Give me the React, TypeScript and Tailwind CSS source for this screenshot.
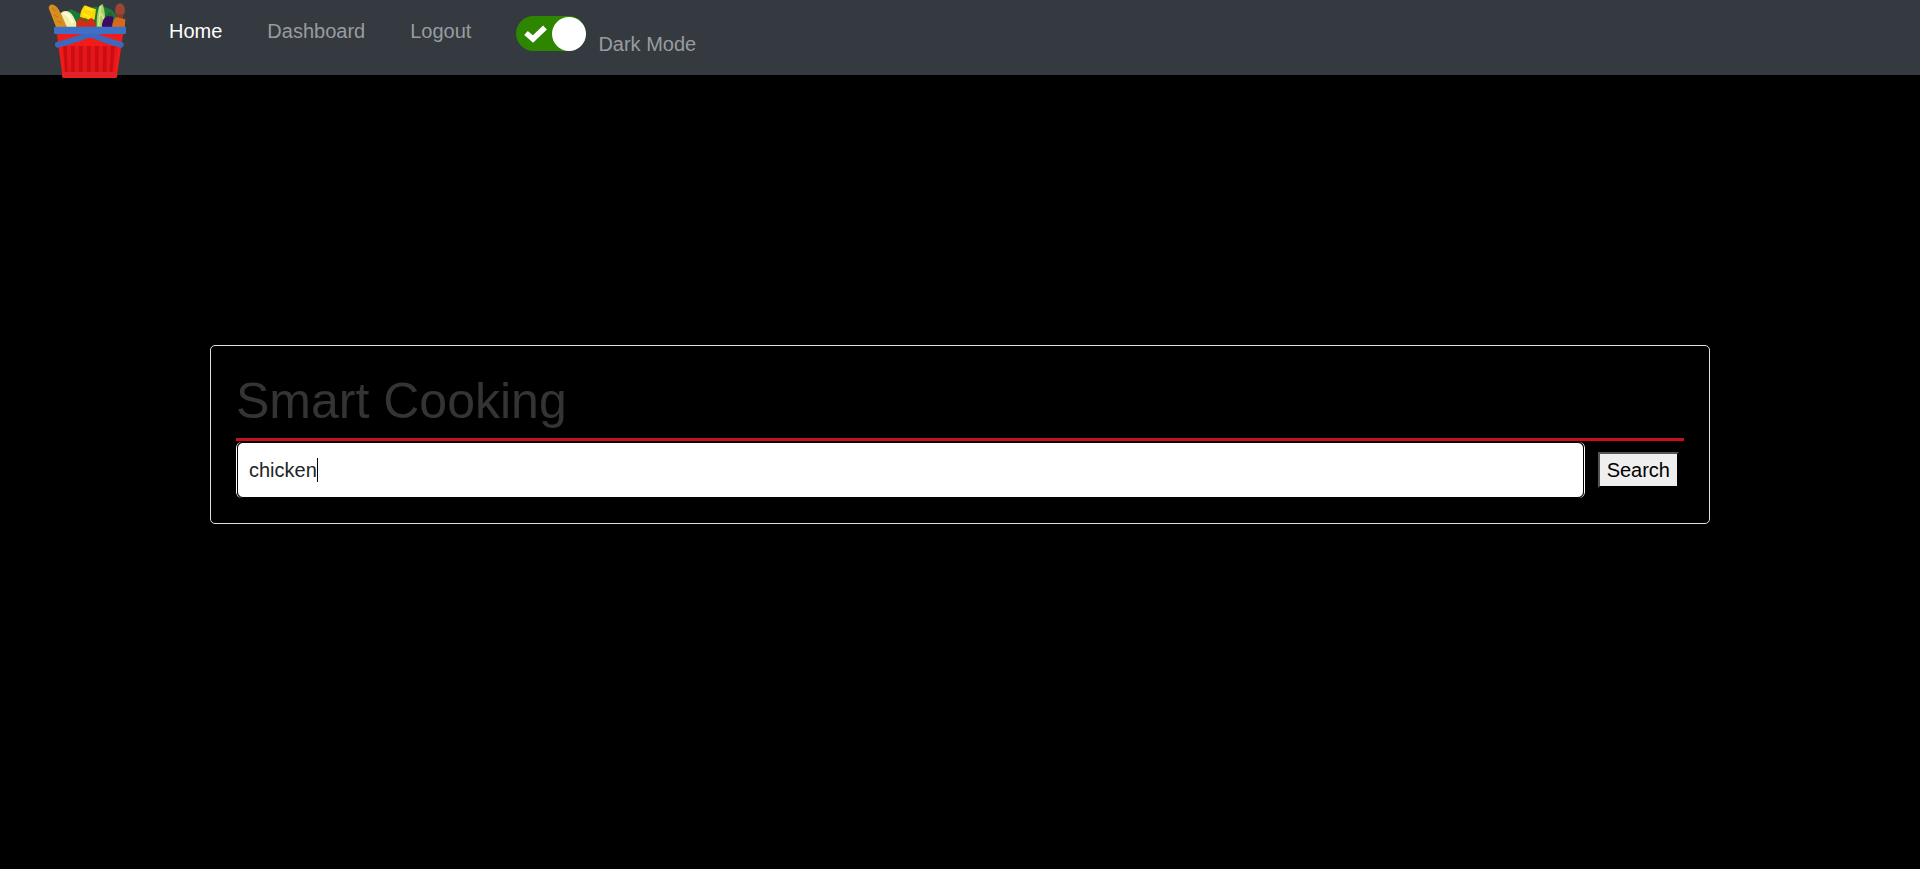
import { useState } from "react";

function BasketLogo() {
  return (
    <svg viewBox="24 6 240 228" className="h-[76px] w-20" aria-hidden="true">
      <path d="M62 66 L68 38 L94 28 L122 42 L162 20 L196 22 L216 30 L232 50 L232 90 L62 90Z" fill="#177a36" />
      <path d="M26 24 Q28 12 40 14 Q52 18 60 36 L84 86 L50 86Z" fill="#d98c20" />
      <path d="M36 24 L46 32 M42 44 L54 52 M50 62 L64 68" stroke="#c67a18" strokeWidth="4" />
      <path d="M62 40 Q72 28 88 36 Q102 44 114 84 L82 84Z" fill="#f6efaa" />
      <path d="M70 42 Q80 38 88 50 L98 68" stroke="#fffde0" strokeWidth="8" fill="none" />
      <path d="M134 16 L168 28 L164 58 L152 66 L120 50 Q122 28 134 16Z" fill="#fbd800" />
      <path d="M136 24 L158 32 M130 42 L152 52" stroke="#ffe92c" strokeWidth="6" />
      <path d="M108 84 Q108 56 126 52 L138 62 L154 54 Q170 62 166 84Z" fill="#d32b18" />
      <path d="M118 58 L136 54 L150 62 L136 66Z" fill="#6a5a1a" />
      <path d="M170 82 Q168 46 178 18 L188 12 Q198 38 194 82Z" fill="#a9cf64" />
      <path d="M182 18 L176 78 M184 40 L192 58" stroke="#d4e896" strokeWidth="5" />
      <path d="M186 84 Q184 56 202 48 Q216 40 220 52 L218 86Z" fill="#3b0a62" />
      <path d="M198 48 L212 36 L222 50Z" fill="#26642a" />
      <ellipse cx="240" cy="30" rx="15" ry="20" fill="#984536" />
      <path d="M230 42 L250 42 L246 68 L228 68Z" fill="#8c3a30" />
      <path d="M216 84 Q218 54 230 52 L256 58 L254 86Z" fill="#d8681d" />
      <path d="M50 98 L250 98 L230 234 L68 234Z" fill="#f11c17" />
      <path d="M66 138 L234 138 L224 216 L74 216Z" fill="#e5171a" />
      <path d="M70 138 H80 L83 216 H75Z M93 138 H104 V216 H94Z M117 138 H128 V216 H117Z M141 138 H152 V216 H141Z M165 138 H176 V216 H165Z M189 138 H200 L199 216 H188Z M213 138 H224 L218 216 H209Z" fill="#c90d12" />
      <rect x="66" y="216" width="166" height="16" rx="6" fill="#e32229" />
      <path d="M54 134 Q110 120 172 94" stroke="#3d68bd" strokeWidth="18" strokeLinecap="round" fill="none" />
      <path d="M128 94 Q190 120 242 134" stroke="#3d68bd" strokeWidth="18" strokeLinecap="round" fill="none" />
      <rect x="42" y="80" width="216" height="22" rx="4" fill="#3f70c8" />
    </svg>
  );
}

export default function App() {
  const [dark, setDark] = useState(true);
  const [query, setQuery] = useState("chicken");

  return (
    <div className="flex min-h-screen flex-col bg-black font-['Liberation_Sans',Arial,sans-serif] text-xl leading-[30px]">
      <nav className="flex h-[75px] items-start bg-[#343a40] pl-12">
        <a href="#" aria-label="Smart Cooking" className="pt-0.5">
          <BasketLogo />
        </a>
        <div className="ml-[41px] flex gap-[45px] pt-4 text-[#999c9f]">
          <a href="#home" className="text-white">Home</a>
          <a href="#dashboard">Dashboard</a>
          <a href="#logout">Logout</a>
        </div>
        <label className="ml-[45px] flex cursor-pointer items-start gap-3 pt-4 text-[#999c9f]">
          <input
            type="checkbox"
            role="switch"
            className="peer sr-only"
            checked={dark}
            onChange={(e) => setDark(e.target.checked)}
          />
          <span
            className={
              dark
                ? "flex h-[35px] w-[70px] items-center justify-between rounded-full bg-[#2e8500] pl-2"
                : "flex h-[35px] w-[70px] flex-row-reverse items-center justify-between rounded-full bg-gray-500 pr-2"
            }
          >
            <svg viewBox="0 0 24 18" className="h-[18px] w-6" aria-hidden="true">
              <path d="M2 8 L9 14 L21 2.5" fill="none" stroke="#fff" strokeWidth="5.5" />
            </svg>
            <span className="size-[34px] rounded-full bg-white" />
          </span>
          <span className="pt-[13px]">Dark Mode</span>
        </label>
      </nav>

      <main className="flex flex-1 flex-col items-center pt-[270px]">
        <section className="w-[78.125%] rounded-[5px] border border-[#dfdfdf] p-[25px]">
          <h1 className="border-b-[3px] border-[#c4111a] pb-[7px] text-[50px] leading-[60px] text-[#343434]">
            Smart Cooking
          </h1>
          <form className="flex items-center gap-[13px] pt-px pr-[5px]" onSubmit={(e) => e.preventDefault()}>
            <div className="relative flex-1 rounded-md border-x border-white">
              <input
                type="text"
                aria-label="Ingredient"
                value={query}
                onChange={(e) => setQuery(e.target.value)}
                className="block h-14 w-full rounded-md border border-black bg-white px-[11px] text-[#212529] outline-none"
              />
              <span className="absolute top-4 left-20 h-6 w-px bg-black" />
            </div>
            <button
              type="submit"
              className="border-2 border-t-[#555] border-r-black border-b-black border-l-[#555] bg-[#efefef] px-[7px] py-px text-black"
            >
              Search
            </button>
          </form>
        </section>
      </main>
    </div>
  );
}
